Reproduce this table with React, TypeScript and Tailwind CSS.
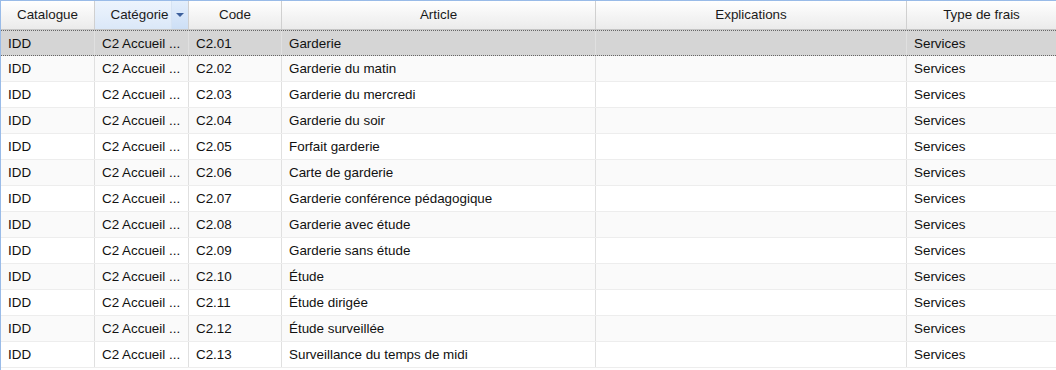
const rows = [
  ["C2.01", "Garderie"],
  ["C2.02", "Garderie du matin"],
  ["C2.03", "Garderie du mercredi"],
  ["C2.04", "Garderie du soir"],
  ["C2.05", "Forfait garderie"],
  ["C2.06", "Carte de garderie"],
  ["C2.07", "Garderie conférence pédagogique"],
  ["C2.08", "Garderie avec étude"],
  ["C2.09", "Garderie sans étude"],
  ["C2.10", "Étude"],
  ["C2.11", "Étude dirigée"],
  ["C2.12", "Étude surveillée"],
  ["C2.13", "Surveillance du temps de midi"],
];

const cell = "shrink-0 h-full flex items-center pt-[2px] pl-[7px] pr-1 border-r border-[#e0e0e0] truncate";

function App() {
  return (
    <div className="w-[1056px] h-[370px] overflow-hidden bg-white border-l border-t border-[#99bbe8] text-[13.4px] text-[#111] font-['Liberation_Sans',sans-serif]">
      {/* En-tête */}
      <div className="flex h-[29px] bg-linear-to-b from-white to-[#ebebeb] border-b border-[#c5c5c5] text-[#1a1a1a]">
        <div className="w-[94px] shrink-0 flex items-center justify-center border-r border-[#d0d0d0]">Catalogue</div>
        <div className="relative w-[94px] shrink-0 flex items-center justify-center border-r border-[#d0d0d0] bg-linear-to-b from-[#edf4fd] to-[#dbe8f8]">
          <span className="pr-1">Catégorie</span>
          <span className="absolute right-0 top-0 w-[17px] h-full flex items-center justify-center bg-linear-to-b from-[#e3eefc] to-[#cddff6] border-l border-[#d6e3f3]">
            <svg width="8" height="4" viewBox="0 0 8 4"><path d="M0 0h8L4 4z" fill="#3c5f9c" /></svg>
          </span>
        </div>
        <div className="w-[93px] shrink-0 flex items-center justify-center border-r border-[#d0d0d0]">Code</div>
        <div className="w-[314px] shrink-0 flex items-center justify-center border-r border-[#d0d0d0]">Article</div>
        <div className="w-[311px] shrink-0 flex items-center justify-center border-r border-[#d0d0d0]">Explications</div>
        <div className="flex-1 flex items-center justify-center">Type de frais</div>
      </div>

      {/* Lignes */}
      {rows.map(([code, article], i) => {
        const bg =
          i === 0
            ? "bg-[#d5d5d5] border-y border-dotted border-[#666]"
            : i % 2 === 1
              ? "bg-[#fafafa] border-b border-[#ededed]"
              : "bg-white border-b border-[#ededed]";
        return (
          <div key={code} className={`flex h-[26px] ${bg}`}>
            <div className={`${cell} w-[94px]`}>IDD</div>
            <div className={`${cell} w-[94px]`}>C2 Accueil ...</div>
            <div className={`${cell} w-[93px]`}>{code}</div>
            <div className={`${cell} w-[314px]`}>{article}</div>
            <div className={`${cell} w-[311px]`}></div>
            <div className="flex-1 h-full flex items-center pt-[2px] pl-[7px]">Services</div>
          </div>
        );
      })}
    </div>
  );
}

export default App;
